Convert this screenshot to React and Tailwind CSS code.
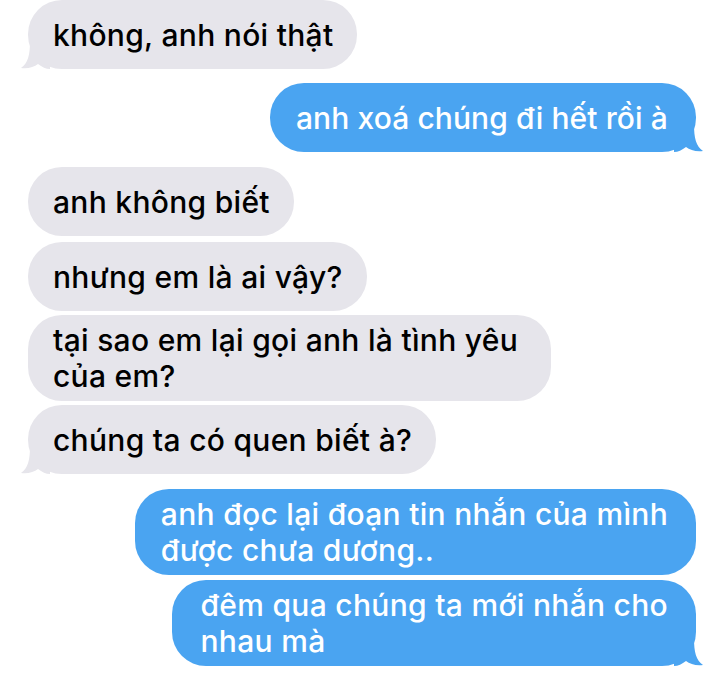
import React from "react";

const messages = [
  { from: "them", lines: ["không, anh nói thật"], tail: true, mt: "mt-0" },
  { from: "me", lines: ["anh xoá chúng đi hết rồi à"], tail: true, mt: "mt-[14px]", extra: "!tracking-[0.1px]" },
  { from: "them", lines: ["anh không biết"], tail: false, mt: "mt-[15px]" },
  { from: "them", lines: ["nhưng em là ai vậy?"], tail: false, mt: "mt-[6px]" },
  { from: "them", lines: ["tại sao em lại gọi anh là tình yêu", "của em?"], tail: false, mt: "mt-[4px]", extra: "!pr-[33px]" },
  { from: "them", lines: ["chúng ta có quen biết à?"], tail: true, mt: "mt-[4px]" },
  { from: "me", lines: ["anh đọc lại đoạn tin nhắn của mình", "được chưa dương.."], tail: false, mt: "mt-[15px]" },
  { from: "me", lines: ["đêm qua chúng ta mới nhắn cho", "nhau mà"], tail: true, mt: "mt-[5px]", extra: "!pl-[29px]" },
];

// iMessage style tail, drawn for the left side; mirrored for the right
const Tail = ({ side, color }) => (
  <svg
    width="30"
    height="30"
    viewBox="0 0 30 30"
    className={
      side === "left"
        ? "absolute bottom-0 left-[-8px]"
        : "absolute bottom-0 right-[-8px] -scale-x-100"
    }
  >
    <path
      d="M10 2 C10 16 8 24 1 29 C8 30 14 28 18 25 C22 28 26 30 30 30 L30 2 Z"
      fill={color}
    />
  </svg>
);

const Bubble = ({ msg }) => {
  const mine = msg.from === "me";
  const color = mine ? "#4aa4f1" : "#e6e5eb";
  return (
    <div
      className={`${msg.mt} relative flex items-center min-h-[69px] rounded-[34px] py-[7px] whitespace-nowrap text-[30px] leading-[36px] font-medium tracking-[0.3px] ${
        mine
          ? "self-end mr-[24px] bg-[#4aa4f1] text-white pl-[26px] pr-[28px]"
          : "self-start ml-[28px] bg-[#e6e5eb] text-black pl-[25px] pr-[24px]"
      } ${msg.extra || ""}`}
    >
      {msg.tail && <Tail side={mine ? "right" : "left"} color={color} />}
      <p className="relative">
        {msg.lines.map((l, i) => (
          <React.Fragment key={i}>
            {i > 0 && <br />}
            {l}
          </React.Fragment>
        ))}
      </p>
    </div>
  );
};

export default function App() {
  return (
    <div
      className="w-[720px] h-[673px] overflow-hidden bg-white flex flex-col"
      style={{ fontFamily: "Inter, 'Noto Sans', sans-serif" }}
    >
      {messages.map((m, i) => (
        <Bubble key={i} msg={m} />
      ))}
    </div>
  );
}
